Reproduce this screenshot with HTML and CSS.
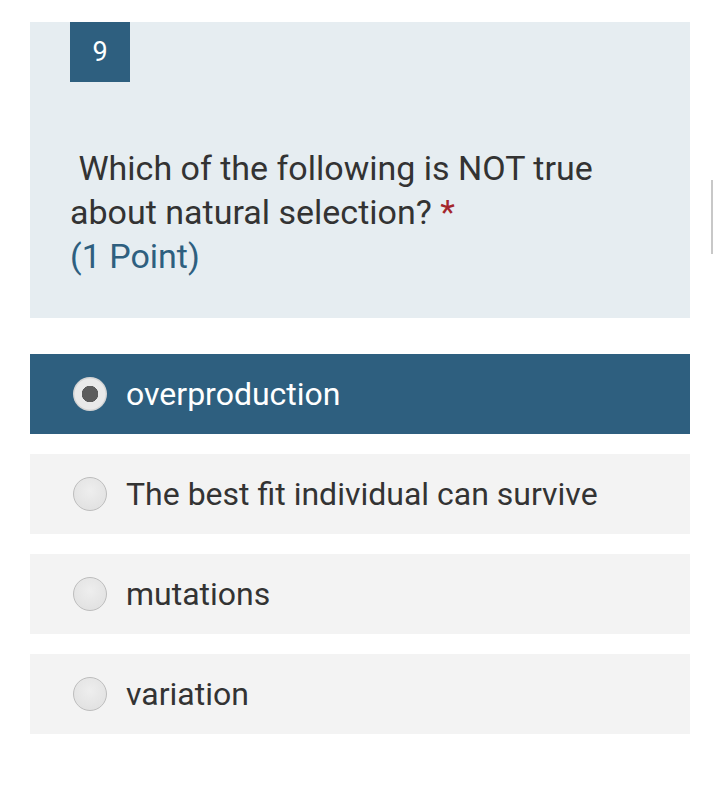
FILE: index.html
```html
<!DOCTYPE html>
<html>
<head>
<meta charset="utf-8">
<link rel="stylesheet" href="styles.css">
</head>
<body>
<div class="page">
  <div class="question">
    <div class="num">9</div>
    <div class="qtext">&nbsp;Which of the following is NOT true about natural selection?&nbsp;<span class="req">*</span><br><span class="points">(1 Point)</span></div>
  </div>
  <div class="options">
    <div class="opt selected"><span class="radio on"></span><span class="label">overproduction</span></div>
    <div class="opt"><span class="radio"></span><span class="label">The best fit individual can survive</span></div>
    <div class="opt"><span class="radio"></span><span class="label">mutations</span></div>
    <div class="opt"><span class="radio"></span><span class="label">variation</span></div>
  </div>
  <div class="edge"></div>
</div>
</body>
</html>
```
FILE: styles.css
```css
html, body { margin: 0; padding: 0; background: #fff; }
body { font-family: Roboto, "Noto Sans", sans-serif; }
.page { width: 713px; height: 785px; position: relative; padding: 22px 0 0 30px; box-sizing: border-box; }
.question { width: 660px; height: 296px; background: #e6edf1; box-sizing: border-box; padding: 0 40px; }
.num { width: 60px; height: 60px; background: #2e5f7f; color: #fff; font-size: 27px; display: flex; align-items: center; justify-content: center; }
.qtext { margin-top: 64px; font-size: 34px; line-height: 44px; color: #333; width: 560px; }
.req { color: #a4262c; }
.points { color: #2e5f7f; }
.options { margin-top: 36px; width: 660px; display: flex; flex-direction: column; gap: 20px; }
.opt { height: 80px; background: #f3f3f3; display: flex; align-items: center; padding-left: 43px; box-sizing: border-box; }
.opt.selected { background: #2e5f7f; }
.radio { width: 34px; height: 34px; border-radius: 50%; box-sizing: border-box; border: 1px solid #bdbdbd; background: radial-gradient(circle at 50% 40%, #eeeeee, #dedede); flex: none; }
.radio.on { border: none; background: radial-gradient(circle, #5c5c5c 0 8px, #e9e9e9 8.5px 15px, #d4d4d4 16px 17px); }
.label { margin-left: 19px; font-size: 32px; color: #333; }
.selected .label { color: #fff; }
.edge { position: absolute; left: 711px; top: 180px; width: 2px; height: 74px; background: #c8c8c8; }
```
